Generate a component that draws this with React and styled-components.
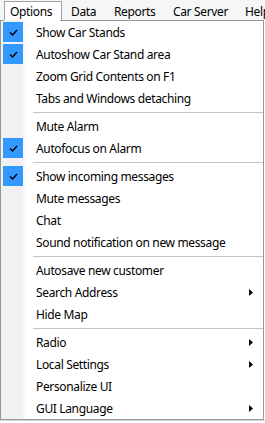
import React from "react";
import styled, { createGlobalStyle } from "styled-components";

const GlobalStyle = createGlobalStyle`
  html, body {
    margin: 0;
    padding: 0;
    background: #ffffff;
  }
  body {
    font-family: "Noto Sans", "Open Sans", sans-serif;
    font-size: 12px;
    letter-spacing: -0.35px;
    color: #000;
  }
`;

const menuBar = [
  { label: "Options", width: 58, pad: 5, open: true },
  { label: "Data", width: 43, pad: 8 },
  { label: "Reports", width: 59, pad: 8 },
  { label: "Car Server", width: 72, pad: 8 },
  { label: "Help", width: 40, pad: 8 },
];

const groups = [
  [
    { label: "Show Car Stands", checked: true },
    { label: "Autoshow Car Stand area", checked: true },
    { label: "Zoom Grid Contents on F1" },
    { label: "Tabs and Windows detaching" },
  ],
  [
    { label: "Mute Alarm" },
    { label: "Autofocus on Alarm", checked: true },
  ],
  [
    { label: "Show incoming messages", checked: true },
    { label: "Mute messages" },
    { label: "Chat" },
    { label: "Sound notification on new message" },
  ],
  [
    { label: "Autosave new customer" },
    { label: "Search Address", submenu: true },
    { label: "Hide Map" },
  ],
  [
    { label: "Radio", submenu: true },
    { label: "Local Settings", submenu: true },
    { label: "Personalize UI" },
    { label: "GUI Language", submenu: true },
  ],
];

function App() {
  return (
    <Screen>
      <GlobalStyle />
      <Bar>
        <BarLead />
        {menuBar.map((m) => (
          <BarItem key={m.label} $width={m.width} $pad={m.pad} $open={m.open}>
            {m.label}
          </BarItem>
        ))}
      </Bar>
      <Dropdown>
        <TopEdge>
          <EdgeLine $width={4} />
          <EdgeGap $width={56} />
          <EdgeLine $grow />
        </TopEdge>
        <List>
          {groups.map((group, gi) => (
            <React.Fragment key={gi}>
              {gi > 0 && (
                <Separator>
                  <SeparatorLine />
                </Separator>
              )}
              {group.map((item) => (
                <Item key={item.label}>
                  <Gutter>
                    {item.checked && (
                      <CheckBox>
                        <svg width="9" height="7" viewBox="0 0 9 7">
                          <path
                            d="M1 3.5 L3.5 6 L8 1"
                            fill="none"
                            stroke="#000"
                            strokeWidth="1.4"
                          />
                        </svg>
                      </CheckBox>
                    )}
                  </Gutter>
                  <Label>{item.label}</Label>
                  {item.submenu && (
                    <Arrow>
                      <svg width="4" height="7" viewBox="0 0 4 7">
                        <path d="M0 0 L4 3.5 L0 7 Z" fill="#000" />
                      </svg>
                    </Arrow>
                  )}
                </Item>
              ))}
            </React.Fragment>
          ))}
        </List>
      </Dropdown>
      <Behind />
    </Screen>
  );
}

export default App;

const Screen = styled.div`
  width: 265px;
  height: 423px;
  overflow: hidden;
  display: flex;
  flex-direction: column;
  background: #ffffff;
`;

const Bar = styled.div`
  display: flex;
  height: 20px;
  background: #f5f6f7;
  white-space: nowrap;
  overflow: hidden;
`;

const BarLead = styled.div`
  width: 4px;
  flex: none;
`;

const BarItem = styled.div`
  flex: none;
  width: ${(p) => p.$width}px;
  box-sizing: border-box;
  padding-left: ${(p) => p.$pad}px;
  line-height: 19px;
  margin-top: 1px;
  border: 1px solid ${(p) => (p.$open ? "#a0a0a0" : "transparent")};
  border-bottom: none;
  background: ${(p) => (p.$open ? "#ffffff" : "transparent")};
`;

const Dropdown = styled.div`
  width: 264px;
  box-sizing: border-box;
  border-left: 1px solid #979797;
  border-right: 1px solid #979797;
  border-bottom: 1px solid #979797;
  background: linear-gradient(
    to right,
    #f1f1f1 0px,
    #f1f1f1 20px,
    #ffffff 26px,
    #ffffff 100%
  );
`;

const TopEdge = styled.div`
  display: flex;
  height: 1px;
  margin-left: -1px;
  margin-right: -1px;
`;

const EdgeLine = styled.div`
  height: 1px;
  background: #979797;
  flex: ${(p) => (p.$grow ? "1" : "none")};
  width: ${(p) => (p.$width ? `${p.$width}px` : "auto")};
`;

const EdgeGap = styled.div`
  height: 1px;
  width: ${(p) => p.$width}px;
  flex: none;
`;

const List = styled.div`
  display: flex;
  flex-direction: column;
`;

const Item = styled.div`
  display: flex;
  align-items: center;
  height: 22px;
  white-space: nowrap;
`;

const Gutter = styled.div`
  width: 35px;
  flex: none;
  display: flex;
  align-items: center;
  padding-left: 2px;
  box-sizing: border-box;
`;

const CheckBox = styled.div`
  width: 20px;
  height: 20px;
  background: #3399ff;
  display: flex;
  align-items: center;
  justify-content: center;
`;

const Label = styled.span`
  flex: 1;
  line-height: 22px;
  padding-top: 1px;
`;

const Arrow = styled.span`
  width: 14px;
  flex: none;
  display: flex;
  align-items: center;
`;

const Separator = styled.div`
  height: 6px;
  display: flex;
  align-items: center;
  padding-left: 32px;
`;

const SeparatorLine = styled.div`
  flex: 1;
  height: 1px;
  background: #c5c5c5;
`;

const Behind = styled.div`
  flex: 1;
  border-top: 1px solid #d5d5d5;
`;
